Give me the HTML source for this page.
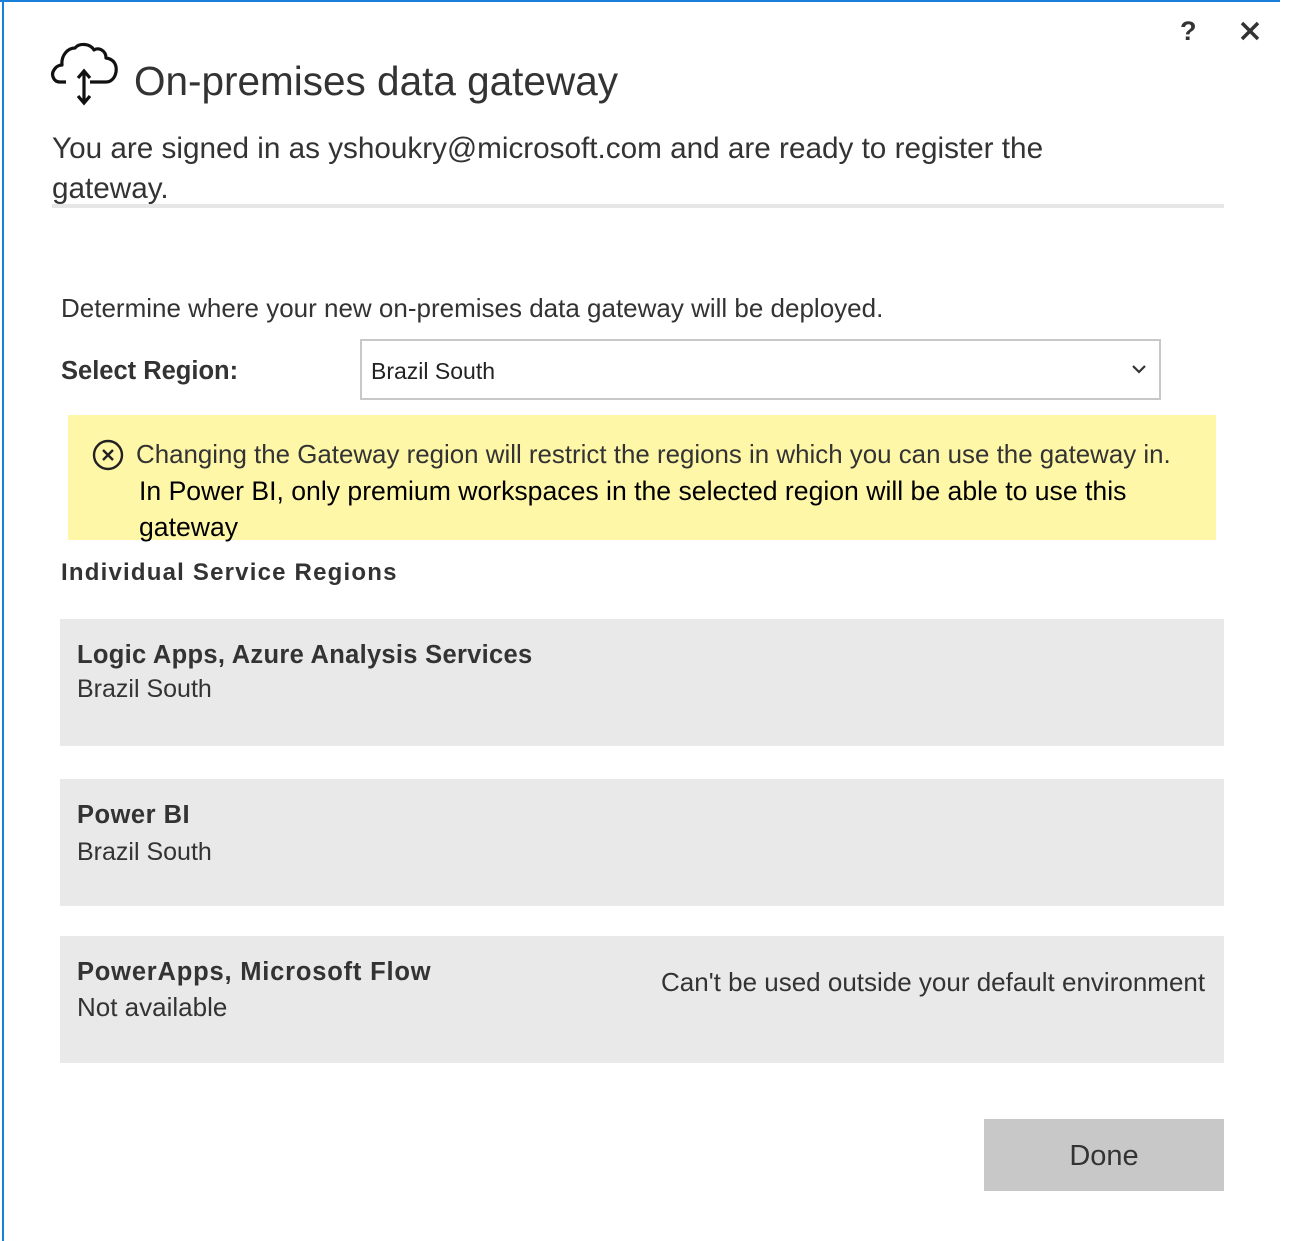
<!DOCTYPE html>
<html><head><meta charset="utf-8"><style>
html,body{margin:0;padding:0;background:#fff;width:1301px;height:1241px;overflow:hidden;font-family:"Liberation Sans",sans-serif;color:#333;}
.a{position:absolute;white-space:nowrap;}
.card{position:absolute;left:60px;width:1164px;background:#e9e9e9;}
.b{font-weight:bold;color:#333;}
</style></head><body>
<div class="a" style="left:0;top:0;width:1280px;height:2px;background:#1a7fd8"></div>
<div class="a" style="left:2px;top:0;width:2px;height:1241px;background:#1a7fd8"></div>

<div class="a" style="left:1180px;top:16px;font-size:27px;font-weight:bold;color:#333">?</div>
<svg class="a" style="left:1240px;top:21px" width="20" height="20" viewBox="0 0 20 20"><path d="M2 2L18 18M18 2L2 18" stroke="#333" stroke-width="3.5"/></svg>

<svg class="a" style="left:50px;top:42px" width="70" height="64" viewBox="0 0 70 64">
<path d="M16 40 H10 C3 40 1 32 4 28 C6 24 10 23 12 23 C11 13 18 6 25 6 C29 1 40 1 44 8 C48 5 56 8 56 16 C64 17 67 23 66 30 C65 36 61 40 56 40 H40" fill="none" stroke="#111" stroke-width="3.2" stroke-linejoin="round"/>
<path d="M34 30 V60 M28 36 L34 29 L40 36 M28 54 L34 61 L40 54" fill="none" stroke="#111" stroke-width="3.2"/>
</svg>
<div class="a" style="left:134px;top:58px;font-size:40.5px;color:#333;">On-premises data gateway</div>

<div class="a" style="left:52px;top:132px;font-size:29.7px;color:#333;">You are signed in as yshoukry@microsoft.com and are ready to register the</div>
<div class="a" style="left:52px;top:172px;font-size:29.7px;color:#333">gateway.</div>
<div class="a" style="left:52px;top:204px;width:1172px;height:4px;background:#e6e6e6"></div>

<div class="a" style="left:61px;top:293px;font-size:26px;color:#333;">Determine where your new on-premises data gateway will be deployed.</div>
<div class="a b" style="left:61px;top:357px;font-size:25.5px;">Select Region:</div>
<div class="a" style="left:360px;top:339px;width:797px;height:57px;border:2px solid #c8c8c8;"></div>
<div class="a" style="left:371px;top:358px;font-size:23px;color:#222">Brazil South</div>
<svg class="a" style="left:1131px;top:363px" width="16" height="12" viewBox="0 0 16 12"><path d="M2 3L8 9L14 3" fill="none" stroke="#333" stroke-width="2.2"/></svg>

<div class="a" style="left:68px;top:415px;width:1148px;height:125px;background:#fff7a8"></div>
<svg class="a" style="left:91px;top:439px" width="34" height="34" viewBox="0 0 34 34"><circle cx="17" cy="16" r="14" fill="none" stroke="#222" stroke-width="2.4"/><path d="M12 11L22 21M22 11L12 21" stroke="#222" stroke-width="2.4"/></svg>
<div class="a" style="left:136px;top:441px;font-size:25.9px;color:#333;">Changing the Gateway region will restrict the regions in which you can use the gateway in.</div>
<div class="a" style="left:139px;top:476px;font-size:26.6px;color:#000;">In Power BI, only premium workspaces in the selected region will be able to use this</div>
<div class="a" style="left:139px;top:512px;font-size:26.6px;color:#000">gateway</div>

<div class="a b" style="left:61px;top:559px;font-size:24px;letter-spacing:1.2px">Individual Service Regions</div>

<div class="card" style="top:619px;height:127px"></div>
<div class="a b" style="left:77px;top:641px;font-size:25.5px;letter-spacing:0.3px">Logic Apps, Azure Analysis Services</div>
<div class="a" style="left:77px;top:675px;font-size:25px">Brazil South</div>

<div class="card" style="top:779px;height:127px"></div>
<div class="a b" style="left:77px;top:801px;font-size:25.5px;letter-spacing:0.5px">Power BI</div>
<div class="a" style="left:77px;top:838px;font-size:25px">Brazil South</div>

<div class="card" style="top:936px;height:127px"></div>
<div class="a b" style="left:77px;top:958px;font-size:25.5px;letter-spacing:0.8px">PowerApps, Microsoft Flow</div>
<div class="a" style="left:77px;top:992px;font-size:26px">Not available</div>
<div class="a" style="left:661px;top:967px;font-size:26px;">Can't be used outside your default environment</div>

<div class="a" style="left:984px;top:1119px;width:240px;height:72px;background:#c8c8c8;"></div>
<div class="a" style="left:984px;top:1140px;width:240px;text-align:center;font-size:29px;color:#333">Done</div>
</body></html>
